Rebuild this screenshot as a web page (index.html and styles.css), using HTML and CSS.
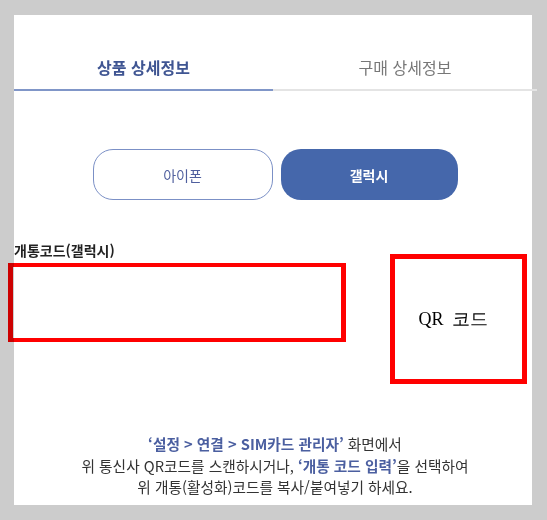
FILE: index.html
```html
<!DOCTYPE html>
<html lang="ko">
<head>
<meta charset="utf-8">
<title>개통코드</title>
<link rel="stylesheet" href="styles.css">
</head>
<body>
<div class="panel">
  <div class="tabs">
    <div class="tab tab-active">상품 상세정보</div>
    <div class="tab">구매 상세정보</div>
  </div>
  <div class="toggle">
    <button class="btn btn-outline">아이폰</button>
    <button class="btn btn-fill">갤럭시</button>
  </div>
  <div class="code-section">
    <div class="code-left">
      <div class="code-label">개통코드(갤럭시)</div>
      <div class="red-box code-box"></div>
    </div>
    <div class="red-box qr-box"><span class="qr-text">QR&nbsp; 코드</span></div>
  </div>
  <div class="guide">
    <p><span class="em">‘설정 &gt; 연결 &gt; SIM카드 관리자’</span> 화면에서</p>
    <p>위 통신사 QR코드를 스캔하시거나, <span class="em">‘개통 코드 입력’</span>을 선택하여</p>
    <p>위 개통(활성화)코드를 복사/붙여넣기 하세요.</p>
  </div>
</div>
</body>
</html>
```
FILE: styles.css
```css
* { box-sizing: border-box; }
html, body { margin: 0; padding: 0; }
body {
  background: #cccccc;
  font-family: "Noto Sans CJK KR", "Noto Sans", sans-serif;
  color: #333;
  width: 547px;
  height: 520px;
  overflow: hidden;
}
.panel {
  margin: 15px 0 0 14px;
  width: 518px;
  height: 490px;
  background: #fff;
}
.tabs {
  display: flex;
  width: 523px;
}
.tab {
  flex: 1 1 0;
  text-align: center;
  font-size: 16px;
  line-height: 24px;
  padding: 40px 0 10px;
  color: #777;
  border-bottom: 2px solid #e4e4e4;
}
.tab-active {
  flex: 0 0 259px;
  color: #3f5592;
  font-weight: 700;
  border-bottom-color: #8096c8;
}
.toggle {
  display: flex;
  justify-content: center;
  gap: 8px;
  margin-top: 58px;
  padding-left: 4px;
}
.btn {
  height: 51px;
  border-radius: 20px;
  font-family: inherit;
  font-size: 14px;
  padding: 0;
}
.btn-outline {
  width: 180px;
  background: #fff;
  border: 1.5px solid #7b90c6;
  color: #4f5f9e;
}
.btn-fill {
  width: 177px;
  background: #4567ab;
  border: none;
  color: #fff;
  font-weight: 700;
}
.code-section {
  display: flex;
  justify-content: space-between;
  align-items: flex-start;
  margin-top: 40px;
}
.code-label {
  font-size: 14px;
  line-height: 20px;
  font-weight: 700;
  color: #222;
}
.red-box {
  border: 5px solid #ff0000;
  mix-blend-mode: multiply;
}
.code-box {
  width: 338px;
  height: 79px;
  margin: 3px 0 0 -6px;
  border-width: 4px 5px 4px 5px;
}
.qr-box {
  width: 137px;
  height: 130px;
  margin: 14px 5px 0 0;
  display: flex;
  align-items: center;
  justify-content: center;
  padding-right: 10px;
}
.qr-text {
  font-family: "Liberation Serif", serif;
  font-size: 18px;
  color: #000;
}
.guide {
  margin-top: 49px;
  padding-left: 4px;
  text-align: center;
  font-size: 14.7px;
  line-height: 21.5px;
  color: #333;
}
.guide p { margin: 0; }
.em {
  color: #4b5fa0;
  font-weight: 700;
}
```
